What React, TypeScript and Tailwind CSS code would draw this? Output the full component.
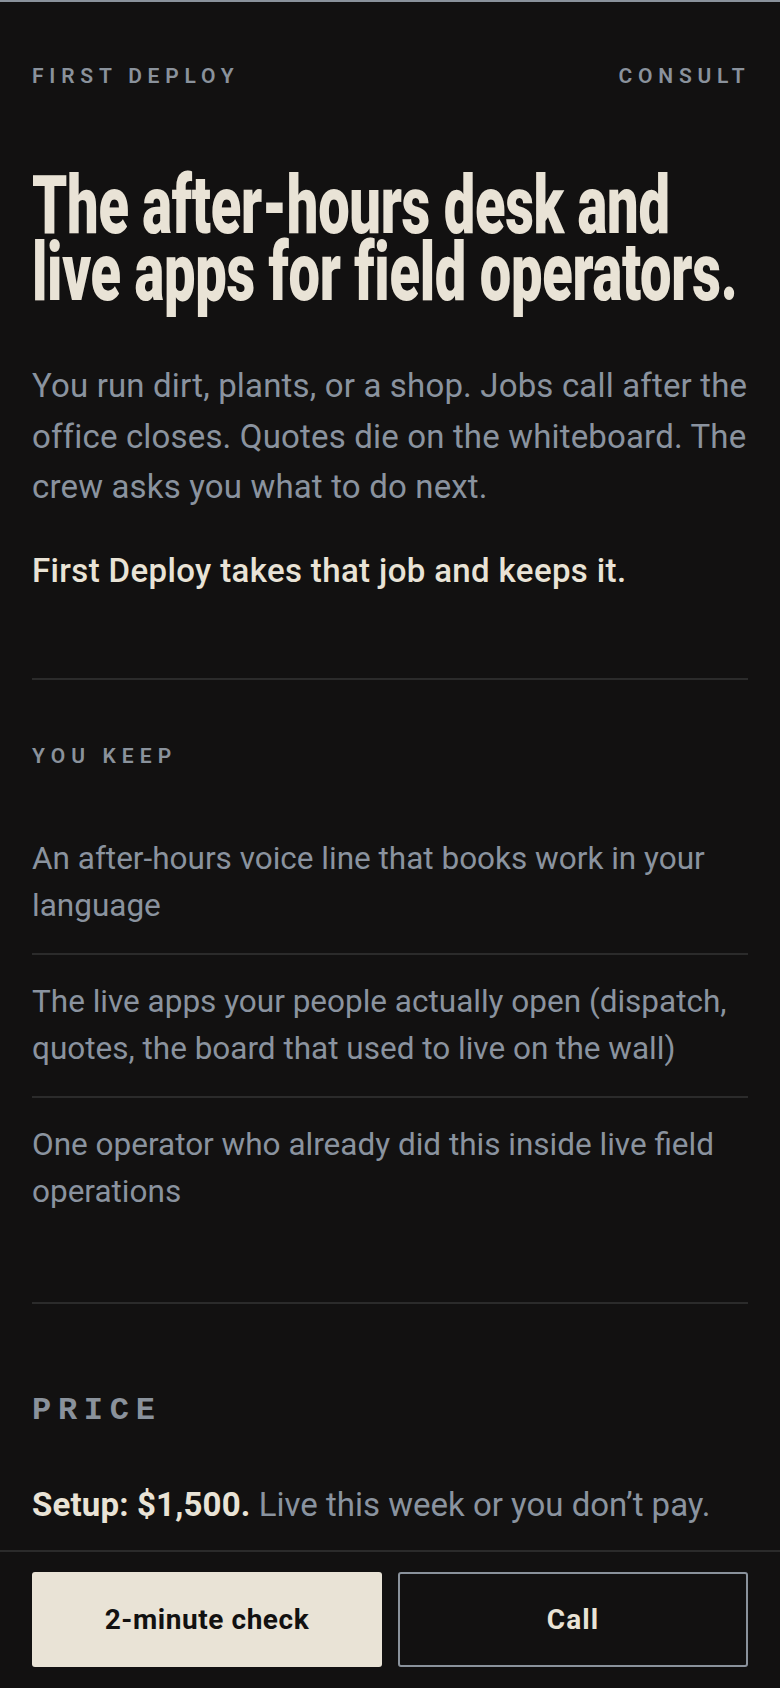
import React from "react";

const items = [
  "An after-hours voice line that books work in your language",
  "The live apps your people actually open (dispatch, quotes, the board that used to live on the wall)",
  "One operator who already did this inside live field operations",
];

export default function App() {
  return (
    <div className="min-h-screen bg-[#121111] border-t-2 border-[#8a929c] font-['Roboto',sans-serif] text-[#8a939f]">
      <div className="px-8 pb-[200px]">
        <header className="flex justify-between pt-[60px] text-[21px] leading-[28px] font-semibold tracking-[0.276em] text-[#8a929c]">
          <span>FIRST DEPLOY</span>
          <span className="-mr-[0.12em]">CONSULT</span>
        </header>

        {/* condensed display headline: tall glyphs stretched vertically */}
        <div className="mt-[82px] h-[134px]">
          <h1 className="origin-top scale-y-[1.457] text-[56px] leading-[46px] font-black tracking-[-0.005em] text-[#e9e3d6]">
            The after-hours desk and
            <br />
            live apps for field operators.
          </h1>
        </div>

        <p className="mt-[55px] text-[33px] leading-[50.5px] tracking-[0.005em]">
          You run dirt, plants, or a shop. Jobs call after the office closes. Quotes die on the whiteboard. The crew asks you what to do next.
        </p>
        <p className="mt-[33px] text-[33px] leading-[50.5px] font-medium tracking-[0.011em] text-[#e9e3d6]">
          First Deploy takes that job and keeps it.
        </p>

        <section className="mt-[82px] border-t-2 border-[#2b2b2b]">
          <h2 className="mt-[62px] text-[21px] leading-[28px] font-semibold tracking-[0.29em] text-[#8a929c]">YOU KEEP</h2>
          <ul className="mt-[42px]">
            {items.map((t, i) => (
              <li
                key={i}
                className={`pt-[24px] pb-[24px] text-[31.5px] leading-[46.5px] ${i < items.length - 1 ? "border-b-2 border-[#2b2b2b]" : ""}`}
              >
                {t}
              </li>
            ))}
          </ul>
        </section>

        <section className="mt-[63px] border-t-2 border-[#2b2b2b]">
          <h2 className="mt-[87px] font-['Liberation_Mono',monospace] text-[32px] leading-[40px] font-bold tracking-[0.21em] text-[#8a929c]">
            PRICE
          </h2>
          <p className="mt-[49px] text-[33px] leading-[50.5px]">
            <span className="font-bold tracking-[0.005em] text-[#e9e3d6]">Setup: $1,500.</span> Live this week or you don’t pay.
          </p>
          <p className="mt-6 text-[33px] leading-[50.5px]">
            Monthly care after that, only if you keep it.
          </p>
        </section>
      </div>

      <div className="fixed inset-x-0 bottom-0 border-t-2 border-[#2b2b2b] bg-[#121111] px-8 pt-[20px] pb-[21px]">
        <div className="grid grid-cols-2 gap-4">
          <button className="h-[95px] rounded-[3px] bg-[#e9e3d6] text-[28px] font-bold tracking-[0.02em] text-[#121111]">
            2-minute check
          </button>
          <button className="h-[95px] rounded-[3px] border-2 border-[#8a929c] text-[28px] font-bold tracking-[0.04em] text-[#e9e3d6]">
            Call
          </button>
        </div>
      </div>
    </div>
  );
}
